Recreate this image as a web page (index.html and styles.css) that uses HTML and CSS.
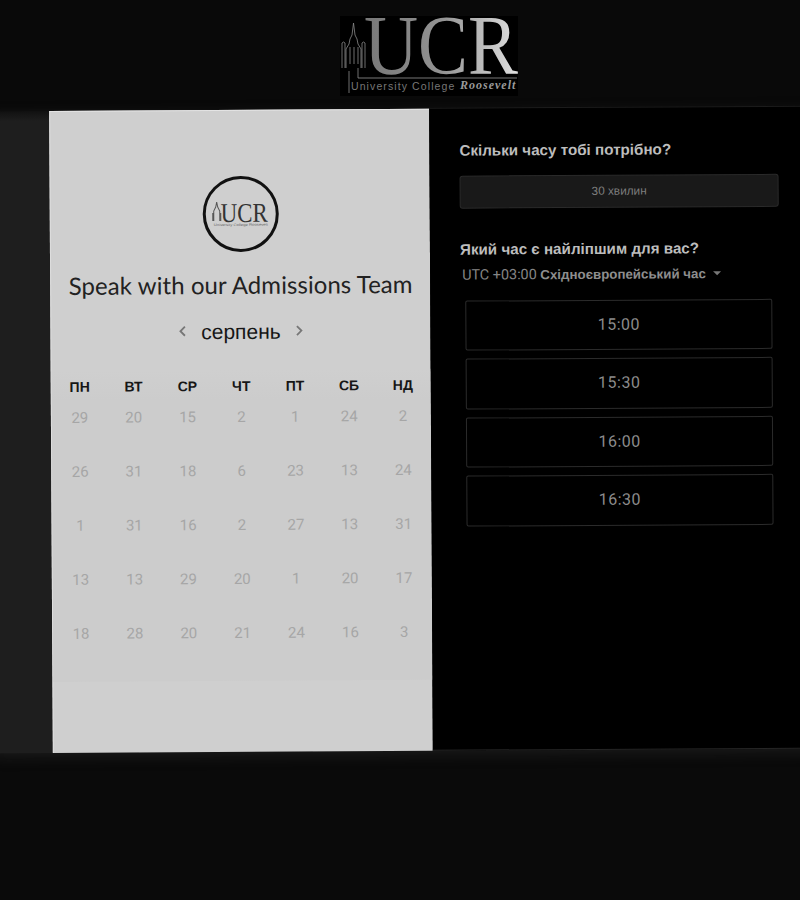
FILE: index.html
```html
<!DOCTYPE html>
<html lang="uk">
<head>
<meta charset="utf-8">
<title>Speak with our Admissions Team</title>
<link rel="stylesheet" href="styles.css">
</head>
<body>
<header class="top">
  <svg class="brand" width="182" height="80" viewBox="0 0 182 80" role="img" aria-label="UCR">
    <defs>
      <linearGradient id="metal" x1="0" y1="0" x2="1" y2="0">
        <stop offset="0" stop-color="#777"/>
        <stop offset="0.5" stop-color="#939393"/>
        <stop offset="1" stop-color="#e0e0e0"/>
      </linearGradient>
    </defs>
    <rect width="178" height="80" fill="#000"/>
    <text class="brand-ucr" x="24" y="58" fill="url(#metal)" textLength="154" lengthAdjust="spacingAndGlyphs">UCR</text>
    <path d="M18 62H177" stroke="#777" stroke-width="1"/>
    <path d="M9 77V55M6 52V33L9 28 10 23 12 19 13.500 7 15 19 17 23 18 28 21 33V52M2 52V27Q3.500 25 5 27V52M22 52V27Q23.500 25 25 27V52M10 48V31M14 48V31M18 48V31M18 52V62" fill="none" stroke="#8a8a8a" stroke-width="0.8"/>
    <text class="brand-sub" x="11" y="74" fill="#777">University College</text>
    <text class="brand-ros" x="120" y="73" fill="#999">Roosevelt</text>
  </svg>
</header>

<main class="sheet">
  <div class="edge"></div>
  <section class="card">
    <div class="seal">
      <svg class="seal-mark" width="66" height="40" viewBox="0 0 66 40" role="img" aria-label="UCR">
        <path d="M6 27V17L8 13 9 8 10 13 12 17V27M5 27V19M13 27V19" fill="none" stroke="#555" stroke-width="1"/>
        <text class="seal-ucr" x="13" y="28" textLength="47" lengthAdjust="spacingAndGlyphs">UCR</text>
        <text class="seal-sub" x="6" y="32" textLength="54" lengthAdjust="spacingAndGlyphs">University College Roosevelt</text>
      </svg>
    </div>
    <h1 class="title">Speak with our Admissions Team</h1>
    <div class="month">
      <svg class="chev" width="8" height="12" viewBox="0 0 8 12"><path d="M6.500 1.500 2 6l4.500 4.500" fill="none" stroke="#777" stroke-width="1.800"/></svg>
      <span class="month-name">серпень</span>
      <svg class="chev" width="8" height="12" viewBox="0 0 8 12"><path d="M1.500 1.500 6 6l-4.500 4.500" fill="none" stroke="#777" stroke-width="1.800"/></svg>
    </div>
    <div class="calendar">
      <div class="wd">ПН</div><div class="wd">ВТ</div><div class="wd">СР</div><div class="wd">ЧТ</div><div class="wd">ПТ</div><div class="wd">СБ</div><div class="wd">НД</div>
      <div class="day">29</div><div class="day">20</div><div class="day">15</div><div class="day">2</div><div class="day">1</div><div class="day">24</div><div class="day">2</div>
      <div class="day">26</div><div class="day">31</div><div class="day">18</div><div class="day">6</div><div class="day">23</div><div class="day">13</div><div class="day">24</div>
      <div class="day">1</div><div class="day">31</div><div class="day">16</div><div class="day">2</div><div class="day">27</div><div class="day">13</div><div class="day">31</div>
      <div class="day">13</div><div class="day">13</div><div class="day">29</div><div class="day">20</div><div class="day">1</div><div class="day">20</div><div class="day">17</div>
      <div class="day">18</div><div class="day">28</div><div class="day">20</div><div class="day">21</div><div class="day">24</div><div class="day">16</div><div class="day">3</div>
    </div>
  </section>
  <section class="panel">
    <h2 class="q">Скільки часу тобі потрібно?</h2>
    <div class="duration">30 хвилин</div>
    <h2 class="q q-time">Який час є найліпшим для вас?</h2>
    <div class="tz">UTC +03:00 <b>Східноєвропейський час</b><span class="caret"></span></div>
    <div class="slots">
      <div class="slot">15:00</div>
      <div class="slot">15:30</div>
      <div class="slot">16:00</div>
      <div class="slot">16:30</div>
    </div>
  </section>
</main>
</body>
</html>
```
FILE: styles.css
```css
* { box-sizing: border-box; }
html, body { margin: 0; height: 900px; overflow: hidden; background: #0a0a0a; }
body { font-family: "Liberation Sans", Arial, sans-serif; }

.top { height: 109px; padding: 16px 0 0 340px; background: #090909; }
.brand { display: block; overflow: visible; }
.brand-ucr { font-family: "Liberation Serif", serif; font-size: 85px; }
.brand-sub { font-family: "Liberation Sans", sans-serif; font-size: 10.5px; letter-spacing: 1.1px; }
.brand-ros { font-family: "Liberation Serif", serif; font-size: 12px; font-style: italic; font-weight: bold; letter-spacing: 1px; }

.sheet {
  display: flex;
  width: 830px;
  height: 641.5px;
  margin-left: -10px;
  transform: rotate(-0.33deg);
  transform-origin: 410px 321px;
  box-shadow: 0 4px 14px rgba(70, 70, 70, .28);
}
.edge {
  flex: 0 0 61px;
  background: linear-gradient(#111 0, #1e1e1e 10px, #1e1e1e 100%);
}
.card {
  flex: 0 0 380px;
  display: flex;
  flex-direction: column;
  align-items: center;
  padding-top: 65px;
  background: #cfcfcf;
  border-top: 1px solid #e4e4e4;
  border-left: 1px solid #dedede;
  color: #1c1c1c;
}
.seal {
  width: 76px;
  height: 76px;
  display: flex;
  align-items: center;
  justify-content: center;
  border: 3px solid #111;
  border-radius: 50%;
}
.seal-mark { overflow: visible; }
.seal-ucr { font-family: "Liberation Serif", serif; font-size: 27px; fill: #333; }
.seal-sub { font-family: "Liberation Sans", sans-serif; font-size: 3.5px; fill: #666; }
.title {
  margin: 18px 0 0;
  font-family: Lato, sans-serif;
  font-size: 24px;
  line-height: 30px;
  font-weight: 400;
  letter-spacing: 0.07px;
  white-space: nowrap;
  color: #222;
}
.month {
  display: flex;
  align-items: center;
  gap: 15px;
  height: 30px;
  margin-top: 17px;
}
.month-name { font-size: 21px; color: #161616; }
.chev { display: block; margin-top: -3px; }
.calendar {
  align-self: stretch;
  display: grid;
  grid-template-columns: repeat(7, 1fr);
  grid-auto-rows: 54px;
  padding: 0 1px;
  margin-top: 23px;
  height: 311px;
  background: linear-gradient(#cfcfcf, #cccccc 30px);
}
.wd {
  height: 32px;
  align-self: start;
  padding-top: 7px;
  text-align: center;
  font-size: 14px;
  font-weight: bold;
  line-height: 18px;
  color: #161616;
}
.day {
  text-align: center;
  font-family: Roboto, sans-serif;
  font-size: 15px;
  line-height: 20px;
  color: #a6a6a6;
  transform: translateY(-17px);
}
.panel {
  flex: 1;
  margin-top: -1px;
  padding: 32px 0 0 30px;
  background: #000;
  border-top: 1px solid #1c1c1c;
  border-bottom: 1px solid #262626;
}
.q {
  margin: 0;
  font-size: 15.2px;
  line-height: 20px;
  font-weight: bold;
  color: #bdbdbd;
}
.duration {
  width: 319px;
  height: 33px;
  margin-top: 15px;
  background: #191919;
  border: 1px solid #2a2a2a;
  border-radius: 3px;
  text-align: center;
  font-size: 11.8px;
  line-height: 31px;
  color: #7d7d7d;
}
.q-time { margin-top: 31px; }
.tz {
  margin: 6px 0 0 2px;
  font-family: Roboto, sans-serif;
  font-size: 14.4px;
  line-height: 20px;
  color: #858585;
}
.tz b { font-family: "Liberation Sans", sans-serif; font-size: 13.3px; color: #8e8e8e; }
.caret {
  display: inline-block;
  margin: 0 0 3px 7px;
  border: 4px solid transparent;
  border-top-color: #777;
  border-bottom-width: 0;
}
.slots {
  display: flex;
  flex-direction: column;
  gap: 8px;
  width: 307px;
  margin: 15px 0 0 5px;
}
.slot {
  height: 50.4px;
  border: 1px solid #2b2b2b;
  border-radius: 2px;
  text-align: center;
  font-family: Roboto, sans-serif;
  font-size: 16px;
  line-height: 48px;
  letter-spacing: 0.5px;
  color: #8c8c8c;
}
```
